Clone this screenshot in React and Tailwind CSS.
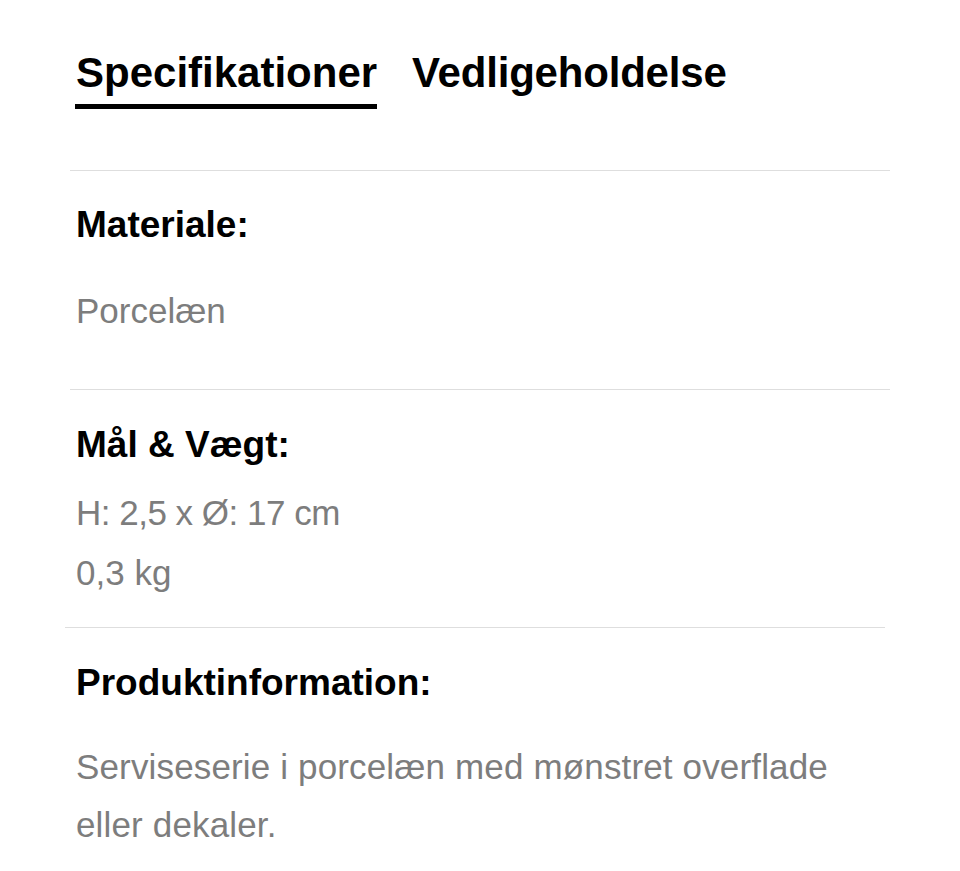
export default function App() {
  return (
    <div className="bg-white min-h-[871px] w-[960px] font-['Liberation_Sans',Arial,sans-serif] text-black">
      <div className="flex gap-[35px] pl-[75px] pt-[52px]">
        <div className="flex flex-col">
          <span className="text-[42px] font-bold leading-[42px] pl-[1px]">Specifikationer</span>
          <div className="mt-[10px] h-[5px] bg-black" />
        </div>
        <span className="text-[42px] font-bold leading-[42px] tracking-[-0.2px]">Vedligeholdelse</span>
      </div>
      <div className="mt-[61px] ml-[70px] w-[820px] h-px bg-[#dedede]" />

      <div className="pl-[76px]">
        <div className="mt-[35px] text-[37px] font-bold leading-[37px]">Materiale:</div>
        <div className="mt-[38px] text-[35px] leading-[60px] text-[#7d7d7d]">Porcelæn</div>
      </div>
      <div className="mt-[48px] ml-[70px] w-[820px] h-px bg-[#dedede]" />

      <div className="pl-[76px]">
        <div className="mt-[36px] text-[37px] font-bold leading-[37px]">Mål &amp; Vægt:</div>
        <div className="mt-[20px] text-[35px] leading-[60px] text-[#7d7d7d]">
          <div className="tracking-[-0.5px]">H: 2,5 x Ø: 17 cm</div>
          <div>0,3 kg</div>
        </div>
      </div>
      <div className="mt-[24px] ml-[65px] w-[820px] h-px bg-[#dedede]" />

      <div className="pl-[76px]">
        <div className="mt-[36px] text-[37px] font-bold leading-[37px]">Produktinformation:</div>
        <div className="mt-[37px] text-[35px] leading-[58px] text-[#7d7d7d] w-[790px] tracking-[0.15px]">
          Serviseserie i porcelæn med mønstret overflade eller dekaler.
        </div>
      </div>
    </div>
  );
}
